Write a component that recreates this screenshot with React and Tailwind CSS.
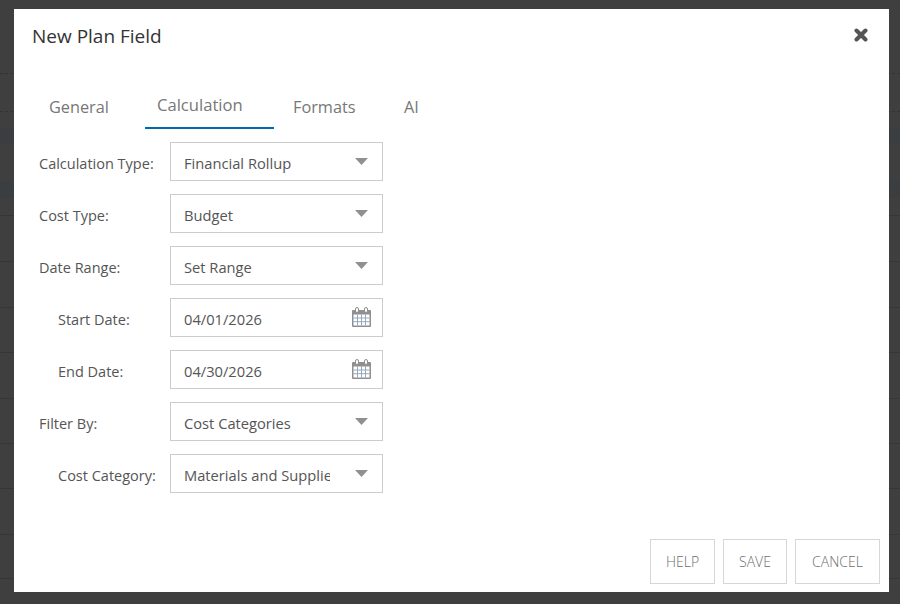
import React from "react";

const Caret = () => (
  <svg width="13" height="7" viewBox="0 0 13 7" className="absolute right-[14px] top-[15px]">
    <path d="M0 0H13L6.5 7Z" fill="#909090" />
  </svg>
);

const Cal = () => (
  <svg width="20" height="20" viewBox="0 0 20 20" className="absolute right-[10px] top-[8px]">
    <rect x="0" y="3" width="19" height="17" rx="1" fill="#8f8f8f" />
    <rect x="1.5" y="7.5" width="16" height="11" fill="#fff" />
    <path d="M5.5 7.5V18.5M9.5 7.5V18.5M13.5 7.5V18.5M1.5 11H17.5M1.5 14.7H17.5" stroke="#93a9bd" strokeWidth="1" />
    <rect x="3.5" y="0.5" width="3" height="5" rx="1.5" fill="#fff" stroke="#8f8f8f" />
    <rect x="12.5" y="0.5" width="3" height="5" rx="1.5" fill="#fff" stroke="#8f8f8f" />
  </svg>
);

const Row = ({ label, value, indent, cal }) => (
  <div className="flex items-center h-[39px]">
    <label className={`w-[131px] pt-[4px] text-[14.5px] text-[#555] ${indent ? "pl-[19px]" : ""}`}>{label}</label>
    <div className="relative w-[213px] h-[39px] border border-[#ccc] bg-white">
      <div className="ml-[13px] w-[146px] overflow-hidden whitespace-nowrap leading-[41px] text-[14.7px] text-[#555]">{value}</div>
      {cal ? <Cal /> : <Caret />}
    </div>
  </div>
);

const Btn = ({ w, children }) => (
  <button className={`${w} h-[45px] border border-[#d6d6d6] bg-white text-[14px] font-light text-[#6d6d6d]`}>{children}</button>
);

const GridRow = ({ h }) => <div className={`${h} border-b border-[#363636]`} />;

export default function App() {
  return (
    <div className="relative w-[900px] h-[604px] bg-[#3f3f3f] font-['Open_Sans',sans-serif] overflow-hidden">
      <div className="flex flex-col">
        <div className="h-[74px] border-b border-dashed border-[#333]" />
        <div className="h-[38px] border-b border-dashed border-[#333]" />
        <div className="h-[16px]" />
        <div className="h-[16px] bg-[#3a3e41]" />
        <div className="h-[37px]" />
        <div className="h-[17px] bg-[#3a3e41]" />
        <GridRow h="h-[18px]" />
        <GridRow h="h-[46px]" />
        <GridRow h="h-[46px]" />
        <GridRow h="h-[45px]" />
        <GridRow h="h-[46px]" />
        <GridRow h="h-[45px]" />
        <GridRow h="h-[45px]" />
        <GridRow h="h-[46px]" />
        <GridRow h="h-[44px]" />
      </div>
      <div className="absolute left-[14px] top-[9px] flex flex-col w-[875px] h-[583px] bg-white">
        <div className="flex items-center justify-between h-[54px] pl-[18px] pr-[21px]">
          <h1 className="text-[19px] text-[#333]">New Plan Field</h1>
          <svg width="14" height="14" viewBox="0 0 14 14" className="mb-[2px]">
            <path d="M2.5 2.5L11.5 11.5M11.5 2.5L2.5 11.5" stroke="#555" strokeWidth="4" strokeLinecap="round" />
          </svg>
        </div>
        <div className="flex mt-[12px] ml-[17px] h-[54px] text-[#777] text-[16.3px]">
          <div className="pt-[20px] pl-[18px] w-[114px]">General</div>
          <div className="pt-[18px] pl-[12px] w-[129px] h-[54px] border-b-2 border-[#0069aa] text-[16.6px]">Calculation</div>
          <div className="pt-[20px] pl-[19px] w-[130px]">Formats</div>
          <div className="pt-[20px]">AI</div>
        </div>
        <div className="flex flex-col gap-[13px] mt-[13px] ml-[25px]">
          <Row label="Calculation Type:" value="Financial Rollup" />
          <Row label="Cost Type:" value="Budget" />
          <Row label="Date Range:" value="Set Range" />
          <Row label="Start Date:" value="04/01/2026" indent cal />
          <Row label="End Date:" value="04/30/2026" indent cal />
          <Row label="Filter By:" value="Cost Categories" />
          <Row label="Cost Category:" value="Materials and Supplies" indent />
        </div>
        <div className="flex justify-end gap-2 mt-auto mr-[9px] mb-[8px]">
          <Btn w="w-[65px]">HELP</Btn>
          <Btn w="w-[64px]">SAVE</Btn>
          <Btn w="w-[85px]">CANCEL</Btn>
        </div>
      </div>
    </div>
  );
}
